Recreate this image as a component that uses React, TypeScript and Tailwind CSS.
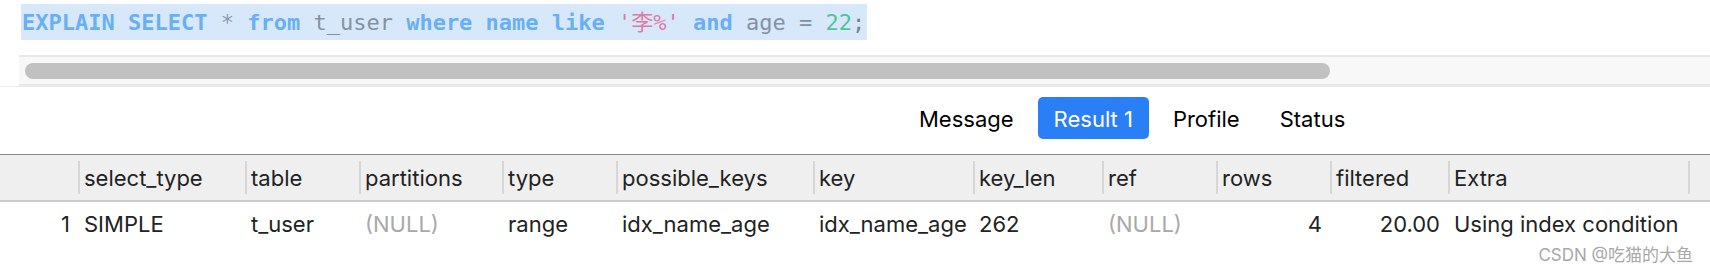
const columns = [
  { name: '', value: '1', align: 'right' },
  { name: 'select_type', value: 'SIMPLE' },
  { name: 'table', value: 't_user' },
  { name: 'partitions', value: '(NULL)', muted: true },
  { name: 'type', value: 'range' },
  { name: 'possible_keys', value: 'idx_name_age' },
  { name: 'key', value: 'idx_name_age' },
  { name: 'key_len', value: '262' },
  { name: 'ref', value: '(NULL)', muted: true },
  { name: 'rows', value: '4', align: 'right' },
  { name: 'filtered', value: '20.00', align: 'right' },
  { name: 'Extra', value: 'Using index condition' },
];

const gridCols =
  'grid grid-cols-[78px_167px_114px_143px_114px_197px_160px_129px_114px_114px_118px_240px_1fr]';

const uiFont = { fontFamily: 'Inter, "Noto Sans CJK SC", sans-serif' };

function CodeLine() {
  return (
    <div className="h-[55px] pt-[4px] pl-[21px]">
      <div
        className="inline-flex h-[36px] items-center bg-[#d7e8fb] pl-[1px] pr-[2px] text-[22px] whitespace-pre"
        style={{ fontFamily: '"DejaVu Sans Mono", "Noto Sans CJK SC", monospace' }}
      >
        <span className="font-bold text-[#68b0f3]">EXPLAIN SELECT</span>
        <span className="text-[#8d98a8]"> * </span>
        <span className="font-bold text-[#68b0f3]">from</span>
        <span className="text-[#8591a3]"> t_user </span>
        <span className="font-bold text-[#68b0f3]">where name like</span>
        <span className="text-[#dd7ca3]"> '李%'</span>
        <span className="font-bold text-[#68b0f3]"> and</span>
        <span className="text-[#8591a3]"> age = </span>
        <span className="text-[#52c49c]">22</span>
        <span className="text-[#7b8391]">;</span>
      </div>
    </div>
  );
}

function ScrollBar() {
  return (
    <div className="border-b border-[#ececec]">
      <div className="ml-[19px] h-[31px] border-t-2 border-b-2 border-[#e8e8e8] bg-[#f8f8f8] pt-[6px] pl-[6px]">
        <div className="h-[16px] w-[1305px] rounded-full bg-[#c1c1c1]" />
      </div>
    </div>
  );
}

function Tabs() {
  const tabs = ['Message', 'Result 1', 'Profile', 'Status'];
  return (
    <div className="flex h-[67px] gap-[8px] pt-[10px] pl-[903px]" style={uiFont}>
      {tabs.map((t) => (
        <div
          key={t}
          className={
            t === 'Result 1'
              ? 'flex h-[42px] items-center rounded-[5px] bg-[#2a7ff6] px-[16px] pt-[2px] text-[22px] text-white'
              : 'flex h-[42px] items-center px-[16px] pt-[2px] text-[22px] text-black'
          }
        >
          {t}
        </div>
      ))}
    </div>
  );
}

function ResultTable() {
  return (
    <div className="text-[22px] text-[#222]" style={uiFont}>
      <div className={`${gridCols} h-[48px] border-t border-b-2 border-t-[#8a8a8a] border-b-[#cacaca] bg-[#efefef]`}>
        {columns.map((c, i) => (
          <div key={i} className="flex items-center">
            {i > 0 && <div className="h-[33px] w-[2px] bg-[#d6d6d6]" />}
            <span className="pt-[1px] pl-[4px]">{c.name}</span>
          </div>
        ))}
        <div className="flex items-center">
          <div className="h-[33px] w-[2px] bg-[#d6d6d6]" />
        </div>
      </div>
      <div className={`${gridCols} h-[42px]`}>
        {columns.map((c, i) => (
          <div
            key={i}
            className={`flex items-center pt-[2px] ${c.align === 'right' ? 'justify-end pr-[8px]' : 'pl-[6px]'} ${c.muted ? 'text-[#a9a9a9]' : ''}`}
          >
            {c.value}
          </div>
        ))}
      </div>
    </div>
  );
}

export default function App() {
  return (
    <div className="h-[274px] w-[1710px] overflow-hidden bg-white">
      <CodeLine />
      <ScrollBar />
      <Tabs />
      <ResultTable />
      <div
        className="flex justify-end pt-[1px] pr-[17px] text-[17px] leading-[20px] text-[#a8a8a8]"
        style={uiFont}
      >
        CSDN @吃猫的大鱼
      </div>
    </div>
  );
}
